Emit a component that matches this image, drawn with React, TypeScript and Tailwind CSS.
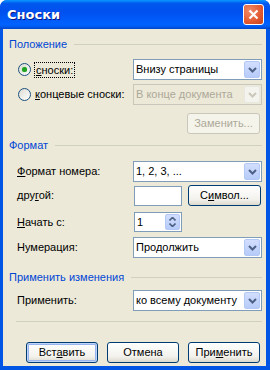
import React from "react";

const font = { fontFamily: '"Liberation Sans", Arial, sans-serif' };

const Chevron = ({ disabled }: { disabled?: boolean }) => (
  <svg width="9" height="6" viewBox="0 0 9 6">
    <path
      d="M1 1 L4.5 4.5 L8 1"
      fill="none"
      stroke={disabled ? "#C9C7BA" : "#4D6185"}
      strokeWidth="2"
    />
  </svg>
);

const Combo = ({ value, disabled }: { value: string; disabled?: boolean }) => (
  <div
    className={`flex h-[21px] w-[129px] items-center border ${
      disabled ? "border-[#C9C7BA] bg-[#ECE9D8] text-[#ACA899]" : "border-[#7F9DB9] bg-white text-black"
    }`}
  >
    <div className="flex-1 overflow-hidden whitespace-nowrap pl-[2px] leading-none">{value}</div>
    <div
      className={`mr-px flex h-[17px] w-[16px] shrink-0 items-center justify-center rounded-[2px] border ${
        disabled
          ? "border-[#E8E8E2] bg-[#F4F3EE]"
          : "border-[#B4C8F6] bg-[linear-gradient(#D2DEFD,#B6CBF9)]"
      }`}
    >
      <Chevron disabled={disabled} />
    </div>
  </div>
);

const Btn = ({
  children,
  disabled,
  def,
  w = "w-[73px]",
}: {
  children: React.ReactNode;
  disabled?: boolean;
  def?: boolean;
  w?: string;
}) => (
  <div
    className={`flex h-[21px] ${w} items-center justify-center rounded-[3px] border ${
      disabled
        ? "border-[#C9C7BA] bg-[#F5F4EA] text-[#ACA899]"
        : "border-[#003C74] bg-[linear-gradient(#FFFFFF,#F3F2ED_70%,#DCD9CD)] text-black"
    } ${def ? "shadow-[inset_0_0_0_1px_#C0D4F8,inset_0_0_0_2px_#97B4EE]" : ""}`}
  >
    {children}
  </div>
);

const Radio = ({ checked }: { checked?: boolean }) => (
  <div className="flex h-[13px] w-[13px] shrink-0 items-center justify-center rounded-full border border-[#1C5180] bg-[linear-gradient(135deg,#DCDBD3,#FFFFFF)]">
    {checked && <div className="h-[5px] w-[5px] rounded-full bg-[#21A121] shadow-[0_0_1px_#5BD35B]" />}
  </div>
);

const GroupTitle = ({ title }: { title: string }) => (
  <div className="flex h-[14px] items-center pl-[6px] pr-[4px]">
    <span className="text-[#0046D5]">{title}</span>
    <div className="ml-[7px] h-px flex-1 bg-[#D0D0BF]" />
  </div>
);

const U = ({ children }: { children: React.ReactNode }) => (
  <span className="underline underline-offset-[1px]">{children}</span>
);

const Row = ({ label, children, mt }: { label: React.ReactNode; children: React.ReactNode; mt: string }) => (
  <div className={`flex items-center ${mt}`}>
    <div className="w-[130px] whitespace-nowrap pl-[14px]">{label}</div>
    {children}
  </div>
);

export default function App() {
  return (
    <div className="flex h-[370px] w-[270px] flex-col rounded-t-[7px] bg-[#0055E5] text-[11px]" style={font}>
      <div className="flex h-[29px] shrink-0 items-center justify-between rounded-t-[7px] bg-[linear-gradient(#0997FF,#0058EE_12%,#0050EE_40%,#0063FF_86%,#0055E5_94%,#0046C8)] pl-[7px] pr-[6px]">
        <span className="text-[13px] font-bold text-white [text-shadow:1px_1px_#0A1883]" style={{ fontFamily: '"DejaVu Sans", sans-serif' }}>
          Сноски
        </span>
        <div className="flex h-[21px] w-[21px] items-center justify-center rounded-[3px] border border-white bg-[radial-gradient(circle_at_30%_30%,#F08A68,#E3592F_60%,#C4411E)]">
          <svg width="11" height="11" viewBox="0 0 11 11">
            <path d="M1.5 1.5 L9.5 9.5 M9.5 1.5 L1.5 9.5" stroke="white" strokeWidth="2.2" />
          </svg>
        </div>
      </div>
      <div className="mx-[3px] mb-[4px] mr-[4px] flex flex-1 flex-col bg-[#ECE9D8] text-[11px] text-black">
        <div className="mt-[8px]">
          <GroupTitle title="Положение" />
        </div>
        <div className="mt-[8px] flex h-[21px] items-center">
          <div className="flex w-[130px] items-center whitespace-nowrap pl-[15px]">
            <Radio checked />
            <span className="ml-[3px] border border-dotted border-black px-px leading-[14px]">
              <U>с</U>носки:
            </span>
          </div>
          <Combo value="Внизу страницы" />
        </div>
        <div className="mt-[4px] flex h-[21px] items-center">
          <div className="flex w-[130px] items-center whitespace-nowrap pl-[15px]">
            <Radio />
            <span className="ml-[4px]">
              <U>к</U>онцевые сноски:
            </span>
          </div>
          <Combo value="В конце документа" disabled />
        </div>
        <div className="mt-[8px] flex justify-end pr-[6px]">
          <Btn disabled>Заменить...</Btn>
        </div>
        <div className="mt-[4px]">
          <GroupTitle title="Формат" />
        </div>
        <Row
          mt="mt-[9px]"
          label={
            <span>
              <U>Ф</U>ормат номера:
            </span>
          }
        >
          <Combo value="1, 2, 3, ..." />
        </Row>
        <Row
          mt="mt-[3px]"
          label={
            <span>
              дру<U>г</U>ой:
            </span>
          }
        >
          <div className="ml-[1px] h-[20px] w-[48px] border border-[#7F9DB9] bg-white" />
          <div className="ml-[6px]">
            <Btn>
              <span>
                С<U>и</U>мвол...
              </span>
            </Btn>
          </div>
        </Row>
        <Row
          mt="mt-[6px]"
          label={
            <span>
              <U>Н</U>ачать с:
            </span>
          }
        >
          <div className="ml-[1px] flex h-[20px] w-[48px] items-center border border-[#7F9DB9] bg-white">
            <div className="flex-1 pl-[2px]">1</div>
            <div className="mr-px flex h-[16px] w-[15px] flex-col items-center justify-center gap-[2px] rounded-[2px] border border-[#B4C8F6] bg-[linear-gradient(#D2DEFD,#B6CBF9)]">
              <svg width="7" height="4" viewBox="0 0 7 4">
                <path d="M0.5 3.5 L3.5 0.5 L6.5 3.5" fill="none" stroke="#4D6185" strokeWidth="1.6" />
              </svg>
              <svg width="7" height="4" viewBox="0 0 7 4">
                <path d="M0.5 0.5 L3.5 3.5 L6.5 0.5" fill="none" stroke="#4D6185" strokeWidth="1.6" />
              </svg>
            </div>
          </div>
        </Row>
        <Row mt="mt-[5px]" label={<span>Нумерация:</span>}>
          <Combo value="Продолжить" />
        </Row>
        <div className="mt-[12px]">
          <GroupTitle title="Применить изменения" />
        </div>
        <Row mt="mt-[6px]" label={<span>Применить:</span>}>
          <Combo value="ко всему документу" />
        </Row>
        <div className="mx-[4px] ml-[13px] mt-[10px] h-px bg-[#D0D0BF]" />
        <div className="mt-[20px] flex gap-[9px] pl-[23px]">
          <Btn def w="w-[72px]">
            <span>
              Вст<U>а</U>вить
            </span>
          </Btn>
          <Btn w="w-[72px]">Отмена</Btn>
          <Btn w="w-[72px]">
            <span>
              При<U>м</U>енить
            </span>
          </Btn>
        </div>
      </div>
    </div>
  );
}
